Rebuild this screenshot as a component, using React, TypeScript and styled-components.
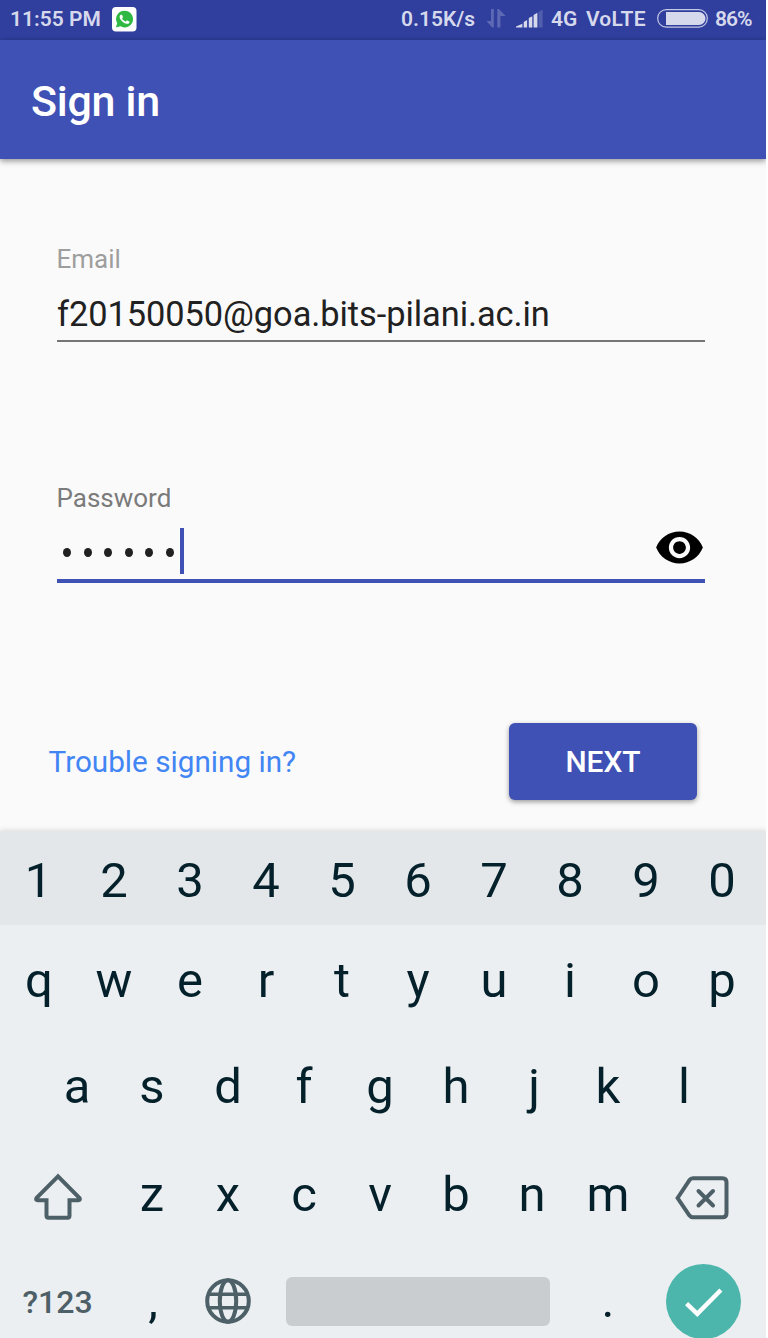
import React from 'react';
import styled, { createGlobalStyle } from 'styled-components';

const GlobalStyle = createGlobalStyle`
  * { box-sizing: border-box; }
  body { margin: 0; background: #fff; font-family: Roboto, sans-serif; }
`;

const Screen = styled.div`
  width: 766px;
  height: 1338px;
  overflow: hidden;
  display: flex;
  flex-direction: column;
  background: #fafafa;
`;

const StatusBar = styled.header`
  height: 40px;
  flex: none;
  display: flex;
  align-items: center;
  padding: 0 14px 2px 10px;
  background: #303e9e;
  color: #d6d9ec;
  font-size: 21px;
  font-weight: 600;
  line-height: 38px;
  white-space: pre;
  svg { display: block; flex: none; }
`;

const StatusText = styled.span<{ $width: number; $gap?: number; $spacing?: number }>`
  width: ${p => p.$width}px;
  margin-right: ${p => p.$gap ?? 0}px;
  letter-spacing: ${p => p.$spacing ?? 0}px;
  flex: none;
`;

const StatusGroup = styled.div`
  margin-left: auto;
  display: flex;
  align-items: center;
`;

const AppBar = styled.div`
  height: 119px;
  flex: none;
  z-index: 1;
  display: flex;
  align-items: center;
  padding: 2px 31px 0 31px;
  background: #3f51b5;
  box-shadow: 0 2px 6px rgba(0, 0, 0, 0.42);
`;

const Title = styled.h1`
  margin: 0;
  color: #fff;
  font-size: 43px;
  font-weight: 500;
  line-height: 56px;
  letter-spacing: -0.3px;
`;

const Form = styled.main`
  height: 672px;
  flex: none;
  padding: 80px 61px 0 57px;
`;

const Field = styled.section<{ $height: number }>`
  height: ${p => p.$height}px;
`;

const Label = styled.label<{ $color: string }>`
  display: block;
  height: 40px;
  line-height: 40px;
  margin-left: -0.5px;
  font-size: 26px;
  color: ${p => p.$color};
`;

const Value = styled.div`
  height: 63px;
  padding-top: 15px;
  border-bottom: 2px solid #757575;
  color: #212121;
  font-size: 34.4px;
  line-height: 40px;
  letter-spacing: -0.06px;
`;

const PasswordValue = styled.div`
  height: 65px;
  display: flex;
  align-items: flex-start;
  padding: 10px 0 0 6px;
  border-bottom: 4px solid #3f51b5;
`;

const Dots = styled.div`
  display: flex;
  gap: 12.6px;
  padding-top: 20px;
`;

const Dot = styled.span`
  width: 8px;
  height: 9px;
  border-radius: 50%;
  background: #212121;
`;

const Caret = styled.span`
  width: 4px;
  height: 46px;
  margin-left: 6px;
  background: #3f51b5;
`;

const Reveal = styled.button`
  margin: -6px 0 0 auto;
  padding: 0;
  border: 0;
  background: none;
  svg { display: block; }
`;

const Actions = styled.div`
  display: flex;
  justify-content: space-between;
  align-items: center;
  margin: 0 8.5px 0 -8.5px;
`;

const HelpLink = styled.a`
  padding-top: 2px;
  color: #4285f4;
  font-size: 29.7px;
  line-height: 40px;
`;

const NextButton = styled.button`
  width: 188px;
  height: 77px;
  padding: 2px 0 0 1px;
  border: 0;
  border-radius: 6px;
  background: #3f51b5;
  box-shadow: 0 2px 5px rgba(0, 0, 0, 0.38);
  color: #fff;
  font: 500 29.9px/40px Roboto, sans-serif;
`;

const Keyboard = styled.div`
  height: 507px;
  flex: none;
  overflow: hidden;
  background: #eceff1;
  box-shadow: 0 -1px 5px rgba(0, 0, 0, 0.12);
`;

const KeyRow = styled.div<{ $height?: number; $inset?: number; $shade?: string }>`
  height: ${p => p.$height ?? 108}px;
  display: flex;
  padding-left: ${p => p.$inset ?? 0}px;
  background: ${p => p.$shade ?? 'transparent'};
`;

const Key = styled.div<{ $width?: number; $nudge?: number; $shift?: number }>`
  width: ${p => p.$width ?? 76}px;
  flex: none;
  display: flex;
  align-items: center;
  justify-content: center;
  padding-top: ${p => p.$nudge ?? 0}px;
  padding-left: ${p => p.$shift ?? 0}px;
  color: #03202b;
  font-size: 49px;
  line-height: 60px;
`;

const SymbolKey = styled(Key)`
  color: #4d6068;
  font-size: 32px;
  font-weight: 500;
`;

const SpaceBar = styled.div`
  width: 264px;
  height: 49px;
  border-radius: 6px;
  background: #c9cdd0;
`;

const EnterKey = styled.div`
  width: 75px;
  height: 75px;
  flex: none;
  border-radius: 50%;
  background: #4db6ac;
`;

const WhatsAppIcon = () => (
  <svg width="25" height="25" viewBox="0 0 25 25">
    <rect width="24.5" height="24.5" rx="4" fill="#fff" />
    <path d="M12.6 3.8a8.3 8.3 0 1 1-4 15.5L3.9 20.6l1.3-4.4A8.3 8.3 0 0 1 12.6 3.8z" fill="#2fb943" />
    <path
      transform="translate(2.7 2.4) scale(.82)"
      fill="#fff"
      d="M17.472 14.382c-.297-.149-1.758-.867-2.03-.967-.273-.099-.471-.148-.67.15-.197.297-.767.966-.94 1.164-.173.199-.347.223-.644.075-.297-.15-1.255-.463-2.39-1.475-.883-.788-1.48-1.761-1.653-2.059-.173-.297-.018-.458.13-.606.134-.133.298-.347.446-.52.149-.174.198-.298.298-.497.099-.198.05-.371-.025-.52-.075-.149-.669-1.612-.916-2.207-.242-.579-.487-.5-.669-.51-.173-.008-.371-.01-.57-.01-.198 0-.52.074-.792.372-.272.297-1.04 1.016-1.04 2.479 0 1.462 1.065 2.875 1.213 3.074.149.198 2.096 3.2 5.077 4.487.709.306 1.262.489 1.694.625.712.227 1.36.195 1.871.118.571-.085 1.758-.719 2.006-1.413.248-.694.248-1.289.173-1.413-.074-.124-.272-.198-.57-.347z"
    />
  </svg>
);

const TrafficIcon = () => (
  <svg width="20" height="38" viewBox="486 0 20 38" fill="#5d69b4">
    <path d="M491 9h2.8v18.6h-1.6L486.4 21H491z" />
    <path d="M497.3 27.6V9h1.6l6.8 7h-5.3v11.6z" />
  </svg>
);

const SignalIcon = () => (
  <svg width="28" height="38" viewBox="516 0 28 38" fill="#d6d9ec">
    <path d="M516 27.5v-.9l6.4-2.8v3.7z" />
    <path d="M523.7 27.5v-5.6l3.4-1.8v7.4z" />
    <path d="M528.8 27.5v-9.4l3.5-1.9v11.3z" />
    <path d="M533.6 27.5V15l3.8-2.3v14.8z" />
    <path d="M538.6 27.5V12l4-2.6v18.1z" fill="#515eae" />
  </svg>
);

const BatteryIcon = () => (
  <svg width="51" height="38" viewBox="657 0 51 38">
    <rect x="657.7" y="9.6" width="49.6" height="17.6" rx="8.6" fill="none" stroke="#c3c8e4" strokeWidth="1.2" />
    <path d="M666 12h33a6.5 6.5 0 0 1 0 13h-33z" fill="#d6d9ec" />
  </svg>
);

const EyeIcon = () => (
  <svg width="51" height="51" viewBox="0 0 24 24">
    <path d="M12 4.5C7 4.5 2.73 7.61 1 12c1.73 4.39 6 7.5 11 7.5s9.27-3.11 11-7.5c-1.73-4.39-6-7.5-11-7.5zM12 17c-2.76 0-5-2.24-5-5s2.24-5 5-5 5 2.24 5 5-2.24 5-5 5zm0-8c-1.66 0-3 1.34-3 3s1.34 3 3 3 3-1.34 3-3-1.34-3-3-3z" />
  </svg>
);

const ShiftIcon = () => (
  <svg width="48" height="48" viewBox="0 0 48 48" fill="none" stroke="#4d6068" strokeWidth="4">
    <path d="M24 3.4 2.4 25.2q-.8 2 1.2 2h8.9v15.5q0 2 2 2h19q2 0 2-2V27.2h8.9q2 0 1.2-2z" />
  </svg>
);

const BackspaceIcon = () => (
  <svg width="54" height="44" viewBox="0 0 54 44" fill="none" stroke="#4d6068" strokeWidth="4">
    <path d="M2.6 22 14.3 4.3Q15.8 2.3 18 2.3h29.5q4 0 4 4v31q0 4-4 4H18q-2.2 0-3.7-2z" />
    <path d="m23.5 15 14.5 14.5m0-14.5L23.5 29.5" strokeLinecap="round" />
  </svg>
);

const GlobeIcon = () => (
  <svg width="46" height="46" viewBox="0 0 46 46" fill="none" stroke="#4d6068" strokeWidth="4">
    <circle cx="23" cy="23" r="20.8" />
    <ellipse cx="23" cy="23" rx="8.2" ry="20.8" />
    <path d="M4 16.2h38M4 29.8h38" strokeWidth="3.4" />
  </svg>
);

const CheckIcon = () => (
  <svg width="75" height="75" viewBox="0 0 75 75" fill="none" stroke="#fff" strokeWidth="4.4">
    <path d="m20.6 39.6 10.7 10.3L54.9 26" />
  </svg>
);

// Optical centring for glyphs whose side bearings are uneven.
const opticalShift: Record<string, number> = { q: 2, a: 2, j: 4, '1': 1 };

const letters = (s: string, nudge = 0) =>
  s.split('').map(c => <Key key={c} $nudge={nudge} $shift={opticalShift[c]}>{c}</Key>);

export default function App() {
  return (
    <>
      <GlobalStyle />
      <Screen>
        <StatusBar>
          <StatusText $width={102}>11:55 PM</StatusText>
          <WhatsAppIcon />
          <StatusGroup>
            <StatusText $width={76} $gap={9}>0.15K/s</StatusText>
            <TrafficIcon />
            <StatusText $width={10} />
            <SignalIcon />
            <StatusText $width={7} />
            <StatusText $width={35}>4G</StatusText>
            <StatusText $width={61} $gap={10} $spacing={0.2}>VoLTE</StatusText>
            <BatteryIcon />
            <StatusText $width={7} />
            <StatusText $width={37} $spacing={-1}>86%</StatusText>
          </StatusGroup>
        </StatusBar>
        <AppBar><Title>Sign in</Title></AppBar>
        <Form>
          <Field $height={239}>
            <Label $color="#9e9e9e">Email</Label>
            <Value>f20150050@goa.bits-pilani.ac.in</Value>
          </Field>
          <Field $height={244.5}>
            <Label $color="#7b7b7b">Password</Label>
            <PasswordValue>
              <Dots>{[0, 1, 2, 3, 4, 5].map(i => <Dot key={i} />)}</Dots>
              <Caret />
              <Reveal aria-label="Show password"><EyeIcon /></Reveal>
            </PasswordValue>
          </Field>
          <Actions>
            <HelpLink>Trouble signing in?</HelpLink>
            <NextButton>NEXT</NextButton>
          </Actions>
        </Form>
        <Keyboard>
          <KeyRow $height={94} $shade="#e3e7e9">{letters('1234567890', 5)}</KeyRow>
          <KeyRow>{letters('qwertyuiop', 4)}</KeyRow>
          <KeyRow $inset={38}>{letters('asdfghjkl')}</KeyRow>
          <KeyRow $inset={2}>
            <SymbolKey $width={112} $nudge={3}><ShiftIcon /></SymbolKey>
            {letters('zxcvbnm')}
            <SymbolKey $width={112} $nudge={6}><BackspaceIcon /></SymbolKey>
          </KeyRow>
          <KeyRow $height={104} $inset={1}>
            <SymbolKey $width={113} $nudge={1}>?123</SymbolKey>
            <Key $shift={2}>,</Key>
            <Key>
              <GlobeIcon />
            </Key>
            <Key $width={303}><SpaceBar /></Key>
            <Key $shift={2}>.</Key>
            <Key $width={116}><EnterKey><CheckIcon /></EnterKey></Key>
          </KeyRow>
        </Keyboard>
      </Screen>
    </>
  );
}
